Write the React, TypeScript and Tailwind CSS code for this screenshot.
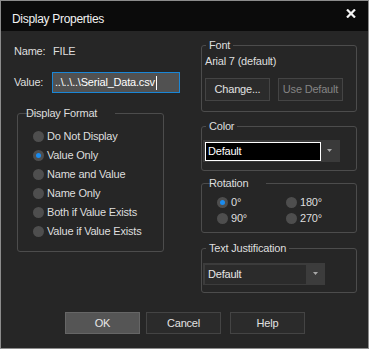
import React from "react";

const font = { fontFamily: '"Liberation Sans", Arial, sans-serif' };

function Radio({ checked, label }: { checked?: boolean; label: string }) {
  return (
    <div className="flex items-center h-full">
      <span className="w-[11px] h-[11px] rounded-full bg-[#4e4e4e] flex items-center justify-center shrink-0">
        {checked && <span className="w-[5px] h-[5px] rounded-full bg-[#1a8cf0]" />}
      </span>
      <span className="ml-[3px] whitespace-nowrap">{label}</span>
    </div>
  );
}

function Group({ title, className, children }: { title: string; className?: string; children: React.ReactNode }) {
  return (
    <fieldset className={"border border-[#4c4c4c] rounded-[3px] " + (className ?? "")}>
      <legend className="px-[3px] leading-[13px] h-[13px] whitespace-nowrap">{title}</legend>
      {children}
    </fieldset>
  );
}

export default function App() {
  const formats = [
    "Do Not Display",
    "Value Only",
    "Name and Value",
    "Name Only",
    "Both if Value Exists",
    "Value if Value Exists",
  ];

  return (
    <div
      className="w-[369px] h-[349px] border border-[#8c8c8c] bg-[#262626] flex flex-col text-[11px] tracking-[-0.2px] text-[#dedede] overflow-hidden"
      style={font}
    >
      {/* title bar */}
      <div className="h-[30px] bg-[#0b0b0b] flex items-start justify-between shrink-0">
        <span className="ml-[11px] mt-[10px] text-[12px] leading-[16px] tracking-[-0.3px] text-[#f2f2f2]">Display Properties</span>
        <svg className="mt-[8px] mr-[12px]" width="10" height="9" viewBox="0 0 10 9">
          <path d="M1 0.5 L9 8.5 M9 0.5 L1 8.5" stroke="#f4f4f4" strokeWidth="2.2" />
        </svg>
      </div>

      <div className="flex flex-col flex-1">
        <div className="flex">
          {/* left column */}
          <div className="w-[189px] flex flex-col">
            <div className="flex mt-[14px] ml-[13px] h-[13px] leading-[13px]">
              <span className="w-[39px]">Name:</span>
              <span>FILE</span>
            </div>
            <div className="flex items-center mt-[14px] ml-[13px]">
              <span className="w-[38px]">Value:</span>
              <div className="w-[128px] h-[21px] border border-[#1a86d6] bg-[#515151] flex items-center pl-[2px] text-white">
                <span className="whitespace-nowrap">..\..\..\Serial_Data.csv</span>
                <span className="w-px h-[14px] bg-white ml-[1px]" />
              </div>
            </div>
            <Group title="Display Format" className="mt-[14px] ml-[16px] w-[147px] pl-[15px] pt-[7px] pb-[10px] [&>legend]:ml-[5px] [&>legend]:-translate-x-[15px]">
              {formats.map((f, i) => (
                <div key={f} className="h-[19px]">
                  <Radio label={f} checked={i === 1} />
                </div>
              ))}
            </Group>
          </div>

          {/* right column */}
          <div className="ml-[11px] w-[156px] flex flex-col">
            <Group title="Font" className="mt-[8px] pb-[10px] [&>legend]:ml-[4px]">
              <div className="mt-[3px] ml-[3px] leading-[13px]">Arial 7 (default)</div>
              <div className="flex gap-[8px] mt-[10px] ml-[3px]">
                <button className="w-[65px] h-[23px] bg-[#2b2b2b] border border-[#444] text-[#e2e2e2]">Change...</button>
                <button className="w-[65px] h-[23px] bg-[#2b2b2b] border border-[#444] text-[#848484]">Use Default</button>
              </div>
            </Group>

            <Group title="Color" className="mt-[8px] pb-[8px] [&>legend]:ml-[4px]">
              <div className="mt-[7px] ml-px w-[137px] h-[22px] bg-[#3a3a3a] flex items-start">
                <div className="mt-[2px] ml-[2px] w-[116px] h-[19px] bg-black border border-white flex items-center pl-[2px] text-white">
                  Default
                </div>
                <svg className="mt-[9px] ml-[6px]" width="5" height="3" viewBox="0 0 5 3">
                  <path d="M0 0 H5 L2.5 3 Z" fill="#a8a8a8" />
                </svg>
              </div>
            </Group>

            <Group title="Rotation" className="mt-[6px] pt-[4px] pb-[6px] pl-[15px] [&>legend]:ml-[4px] [&>legend]:-translate-x-[15px]">
              <div className="grid grid-cols-[69px_1fr]">
                <div className="h-[16px]"><Radio label="0°" checked /></div>
                <div className="h-[16px]"><Radio label="180°" /></div>
                <div className="h-[16px]"><Radio label="90°" /></div>
                <div className="h-[16px]"><Radio label="270°" /></div>
              </div>
            </Group>

            <Group title="Text Justification" className="mt-[9px] pb-[7px] [&>legend]:ml-[4px]">
              <div className="mt-[8px] ml-px w-[122px] h-[22px] bg-[#3c3c3c] flex items-start">
                <div className="mt-[2px] ml-[2px] w-[101px] h-[19px] bg-[#2b2b2b] flex items-center pl-[3px] text-[#e6e6e6]">
                  Default
                </div>
                <svg className="mt-[9px] ml-[7px]" width="5" height="3" viewBox="0 0 5 3">
                  <path d="M0 0 H5 L2.5 3 Z" fill="#a8a8a8" />
                </svg>
              </div>
            </Group>
          </div>
        </div>

        {/* buttons */}
        <div className="flex mt-[19px] ml-[64px]">
          <button className="w-[75px] h-[22px] bg-[#555555] border border-[#666] text-[#e8e8e8]">OK</button>
          <button className="ml-[6px] w-[75px] h-[22px] bg-[#2b2b2b] border border-[#444] text-[#e2e2e2]">Cancel</button>
          <button className="ml-[9px] w-[75px] h-[22px] bg-[#2b2b2b] border border-[#444] text-[#e2e2e2]">Help</button>
        </div>
      </div>
    </div>
  );
}
